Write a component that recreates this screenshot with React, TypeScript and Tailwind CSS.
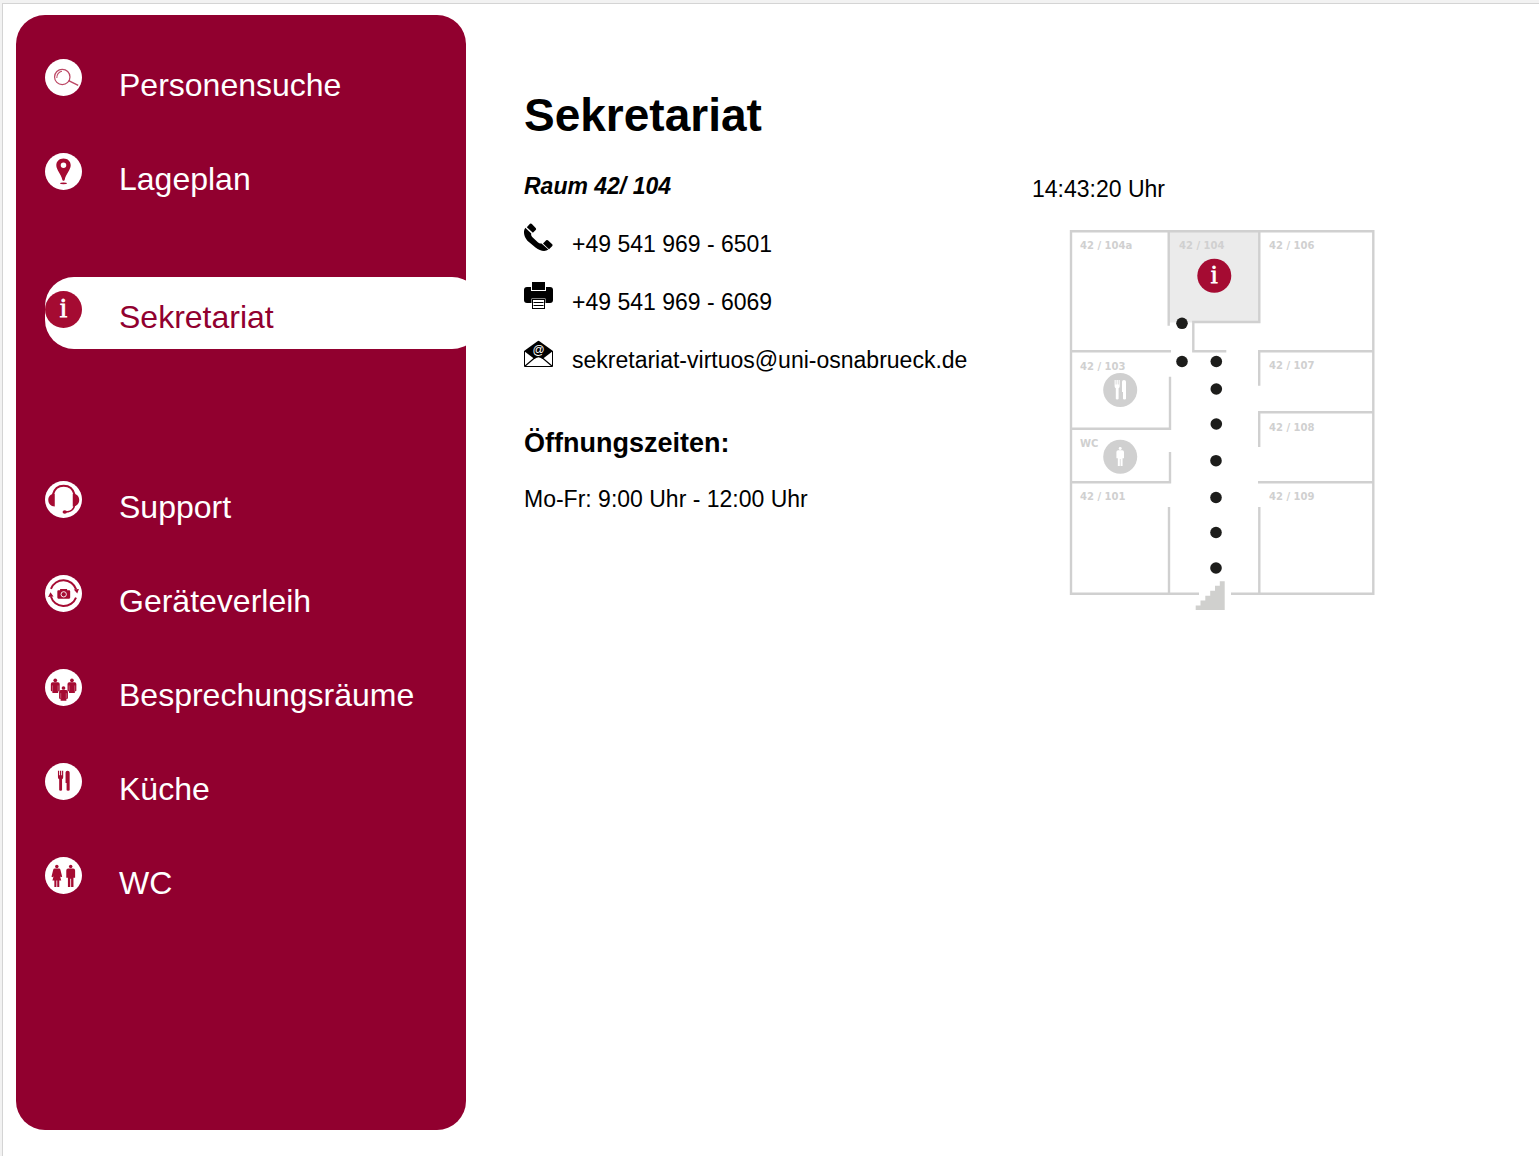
import type { ReactNode } from "react";

const RED = "#a50b32";

function Badge({ children }: { children: ReactNode }) {
  return (
    <svg viewBox="0 0 36 36" className="mt-[14px] h-[37px] w-[37px] shrink-0" aria-hidden="true">
      <circle cx="18" cy="18" r="18" fill="#fff" />
      {children}
    </svg>
  );
}

function Cutlery() {
  return (
    <>
      <path d="M12.600 7.500h1.100v4.500h.8V7.500h1.300v4.500h.8V7.500h1.100v6.300q0 1.400-1.100 1.900v10.500q0 .8-1.400.8t-1.400-.8V15.700q-1.200-.5-1.200-1.900z" />
      <path d="M20 9.200q0-1.700 2-1.700t2 1.700v17q0 .8-1.500.8t-1.500-.8v-6.700h-1z" />
    </>
  );
}

function Torso({ x, y }: { x: number; y: number }) {
  return (
    <g transform={`translate(${x} ${y})`}>
      <circle cx="0" cy="0" r="1.800" />
      <path d="M-2.600 2h5.200q1.700 0 1.700 1.700v6.100q0 .8-.8.800h-.7v1.700h-5.600v-1.700h-.7q-.8 0-.8-.8V3.700q0-1.700 1.700-1.700z" />
      <path d="M-2.700 5v5.300M2.700 5v5.300" stroke="#fff" strokeWidth="0.300" />
    </g>
  );
}

function Man() {
  return (
    <>
      <circle cx="0" cy="-9" r="1.700" />
      <path d="M-2.400-7h4.800q1.900 0 1.900 1.900v7h-1.600v9H.4v-8h-.8v8h-2.300v-9h-1.600v-7q0-1.900 1.900-1.900z" />
    </>
  );
}

const icons = {
  search: (
    <g fill="none" stroke={RED} strokeOpacity="0.75">
      <circle cx="16.800" cy="17.500" r="7.500" strokeWidth="1.200" />
      <path d="M11.500 18.500a6 6 0 0 1 5-6.500" strokeWidth="1" />
      <path d="m23 21 9.300 4.700" strokeWidth="1.400" />
    </g>
  ),
  pin: (
    <g fill={RED}>
      <path
        fillRule="evenodd"
        d="M18 5.300c-4.100 0-7 2.800-7 6.700 0 4.500 4.500 8 5.900 14.200q1.100 1.700 2.200 0C20.500 20 25 16.500 25 12c0-3.900-2.900-6.700-7-6.700zm0 4a2.700 2.700 0 1 1 0 5.400 2.700 2.700 0 0 1 0-5.400z"
      />
      <ellipse cx="18" cy="29.500" rx="3.300" ry="0.900" />
    </g>
  ),
  info: (
    <>
      <circle cx="18" cy="18" r="18" fill={RED} />
      <text x="18" y="25.500" textAnchor="middle" fontSize="26" fill="#fff" stroke="#fff" strokeWidth="0.800" className="font-['Liberation_Serif',serif]">
        i
      </text>
    </>
  ),
  headset: (
    <g fill={RED}>
      <path d="M9.500 12.500v12.300C5.500 24.800 3.200 22.100 3.200 18.600s2.300-6.100 6.300-6.100zM27 12.500v12.300c4 0 6.300-2.700 6.300-6.200S31 12.500 27 12.500z" />
      <path d="M7.500 13.500C9 7.500 13 4.600 18.200 4.600s9.200 2.900 10.700 8.900" fill="none" stroke={RED} strokeWidth="2" />
      <path d="M28.800 23.500c-.7 4.300-4 6.600-9.300 6.700" fill="none" stroke={RED} strokeWidth="1.500" />
      <ellipse cx="19.200" cy="30.200" rx="2.100" ry="1.700" />
    </g>
  ),
  camera: (
    <g fill={RED}>
      <path d="M5.800 13.500a13 13 0 0 1 24.500.5" fill="none" stroke={RED} strokeWidth="1.900" />
      <path d="M30.200 22a13 13 0 0 1-24.500-1" fill="none" stroke={RED} strokeWidth="1.900" />
      <path d="m28 14.200 5-.7-1.600 4.500zM3 21.500l2.300-4.800 3 4.300z" />
      <path d="M13 14.900h1.700v-1.400h6.800v1.400h2q1 0 1 1V22q0 1-1 1H13q-1 0-1-1v-6.100q0-1 1-1z" />
      <circle cx="18.200" cy="18.800" r="2.600" fill="none" stroke="#fff" strokeWidth="0.900" />
    </g>
  ),
  people: (
    <g fill={RED}>
      <Torso x={10} y={11} />
      <Torso x={26.200} y={11} />
      <Torso x={18} y={18.500} />
    </g>
  ),
  cutlery: (
    <g fill={RED}>
      <Cutlery />
    </g>
  ),
  restroom: (
    <g fill={RED}>
      <circle cx="11.500" cy="9.200" r="1.700" />
      <path d="M9.500 11.200h4q1.200 0 1.500 1.200l1.700 6.700-1.500.5-.8-1.700 1.400 5h-1.900v6.200h-2v-6.200h-.8v6.200h-2v-6.200H7.200l1.400-5-.8 1.700-1.500-.5L8 12.400q.3-1.200 1.500-1.200z" />
      <g transform="translate(25 18.200)">
        <Man />
      </g>
    </g>
  ),
};

type NavEntry = { label: string; icon: keyof typeof icons; active?: boolean };

const entries: NavEntry[] = [
  { label: "Personensuche", icon: "search" },
  { label: "Lageplan", icon: "pin" },
  { label: "Sekretariat", icon: "info", active: true },
  { label: "Support", icon: "headset" },
  { label: "Geräteverleih", icon: "camera" },
  { label: "Besprechungsräume", icon: "people" },
  { label: "Küche", icon: "cutlery" },
  { label: "WC", icon: "restroom" },
];

function Sidebar() {
  return (
    <nav
      aria-label="Hauptmenü"
      className="mt-[11px] mb-[26px] ml-[13px] w-[450px] shrink-0 overflow-hidden rounded-[29px] bg-[#91002f] pt-[30px] pl-[29px]"
    >
      <ul className="flex flex-col gap-[22px]">
        {entries.map(({ label, icon, active }) => (
          <li key={label} className={active ? "mt-11 mb-24 -mr-[15px]" : ""}>
            <a
              href="#"
              aria-current={active ? "page" : undefined}
              className={
                active
                  ? "flex h-[72px] items-start gap-[37px] rounded-[29px] bg-white text-[#91002f]"
                  : "flex h-[72px] items-start gap-[37px] text-white"
              }
            >
              <Badge>{icons[icon]}</Badge>
              <span className="mt-[22px] text-[32px] leading-9">{label}</span>
            </a>
          </li>
        ))}
      </ul>
    </nav>
  );
}

function PhoneIcon() {
  return (
    <svg viewBox="0 0 30 30" className="h-[30px] w-[30px] shrink-0" aria-label="Telefon">
      <path d="m2.800 4.200 3.200-3.400q1-.8 1.900.2l4 4.300q.6.900-.2 1.700L8.900 9.700zM19 20.600l3.200-3.400q.8-.6 1.700.1l4.300 3.900q.8.800.1 1.700l-3.300 3.300z" />
      <path d="m1.300 4.800 6 5.800q-.6 1.700.9 3.500l5.600 5.200q1.800 1.500 3.700 1.100l6.900 6.200c-3.100 2.400-8.200 1.700-12.900-2.100L3.400 17.700C-.2 13.500-1.100 8 1.300 4.800z" />
    </svg>
  );
}

function PrinterIcon() {
  return (
    <svg viewBox="0 0 30 30" className="h-[30px] w-[30px] shrink-0" aria-label="Fax">
      <path d="M3 6h23q3 0 3 3v10q0 3-3 3H3q-3 0-3-3V9q0-3 3-3z" />
      <rect x="7.500" y="0.500" width="14" height="9" stroke="#fff" />
      <rect x="7.500" y="17.500" width="14" height="11" fill="#fff" />
      <rect x="8.500" y="18.500" width="12" height="9" fill="#fff" stroke="#000" />
      <path d="M9.500 21.500h10M9.500 24.500h10" stroke="#000" />
    </svg>
  );
}

function MailIcon() {
  return (
    <svg viewBox="0 0 30 30" className="h-[30px] w-[30px] shrink-0" aria-label="E-Mail">
      <path d="M.5 12v15.500h28V12" fill="#fff" stroke="#000" />
      <path d="M0 12 13.500 2.200q1-.7 2 0L29 12l-10.500 8q-4-3.500-8 0z" />
      <path d="m.8 27.300 10-8.500q3.700-3 7.400 0l10 8.500" fill="none" stroke="#000" strokeWidth="1.200" />
      <text x="14.500" y="14.500" textAnchor="middle" fontSize="12" fill="#fff">
        @
      </text>
    </svg>
  );
}

const contacts = [
  { text: "+49 541 969 - 6501", icon: <PhoneIcon /> },
  { text: "+49 541 969 - 6069", icon: <PrinterIcon /> },
  { text: "sekretariat-virtuos@uni-osnabrueck.de", icon: <MailIcon /> },
];

const rooms = [
  { name: "42 / 104a", x: 11, y: 20 },
  { name: "42 / 104", x: 110, y: 20 },
  { name: "42 / 106", x: 200, y: 20 },
  { name: "42 / 103", x: 11, y: 141 },
  { name: "42 / 107", x: 200, y: 140 },
  { name: "42 / 108", x: 200, y: 202 },
  { name: "WC", x: 11, y: 218 },
  { name: "42 / 101", x: 11, y: 271 },
  { name: "42 / 109", x: 200, y: 271 },
];

const route = [
  [113, 94.300],
  [113, 132.500],
  [147.300, 132.500],
  [147.300, 160],
  [147.300, 195],
  [147, 231.700],
  [147, 268.500],
  [147, 303.500],
  [147, 339],
];

function FloorPlan() {
  return (
    <svg viewBox="0 0 306 382" className="mt-[27px] ml-[37px] h-[382px] w-[306px]" role="img" aria-label="Lageplan">
      <path d="M99.700 2h90.600v91.500H99.700z" fill="#ebebeb" />
      <path
        fill="none"
        stroke="#d0d0d0"
        strokeWidth="2.400"
        d="M130 364.700H2V2.200h302.300v362.500H162M99.700 2v94.700M2 122.300h100M190.300 2v91H124.300v29.300h33M304 122.300H190.200v34.400M304 183.300H190.200V218M304 253.300H189M190.300 278v86.700M2 199.700h99v-52M2 253.300h99V223M100 278v86.700"
      />
      <path
        fill="#d0d0ce"
        d="M126.700 381v-4.500h4.800v-4.900h4.800v-4.900h4.900v-5h4.800v-5h4.800v-4.400h4.900V381z"
      />
      <g fill="#d0d0d0" fontSize="10" className="font-['DejaVu_Sans',sans-serif] font-bold">
        {rooms.map((r) => (
          <text key={r.name} x={r.x} y={r.y}>
            {r.name}
          </text>
        ))}
      </g>
      <g fill="#1d1d1b">
        {route.map(([x, y]) => (
          <circle key={`${x}-${y}`} cx={x} cy={y} r="5.800" />
        ))}
      </g>
      <circle cx="145.300" cy="46.700" r="17" fill={RED} />
      <text x="145.300" y="54" textAnchor="middle" fontSize="25" fill="#fff" stroke="#fff" strokeWidth="0.800" className="font-['Liberation_Serif',serif]">
        i
      </text>
      <circle cx="51.200" cy="161" r="17" fill="#d0d0d0" />
      <g fill="#fff" transform="translate(33 143.500)">
        <Cutlery />
      </g>
      <circle cx="51.200" cy="227.700" r="17" fill="#d0d0d0" />
      <g fill="#fff" transform="translate(51.200 227.500) scale(.88)">
        <Man />
      </g>
    </svg>
  );
}

export default function App() {
  return (
    <div className="min-h-screen bg-[#f2f2f2] pt-[3px] pl-[2px] font-['Liberation_Sans',Arial,sans-serif] text-black">
      <div className="flex min-h-[calc(100vh-3px)] border-t border-l border-[#d4d4d4] bg-white">
        <Sidebar />
        <main className="flex-1 pt-[84px] pl-[58px] text-[23px] leading-[26px]">
          <h1 className="text-[46px] leading-[54px] font-bold">Sekretariat</h1>
          <div className="mt-[31px] grid grid-cols-[508px_1fr]">
            <section>
              <p className="font-bold italic">Raum 42/ 104</p>
              <ul className="mt-6 flex flex-col gap-6">
                {contacts.map((c) => (
                  <li key={c.text} className="flex items-start gap-[18px]">
                    {c.icon}
                    <span className="mt-2">{c.text}</span>
                  </li>
                ))}
              </ul>
              <h2 className="mt-[55px] text-[27px] leading-[30px] font-bold">Öffnungszeiten:</h2>
              <p className="mt-7">Mo-Fr: 9:00 Uhr - 12:00 Uhr</p>
            </section>
            <section className="pt-[3px]">
              <time className="block">14:43:20 Uhr</time>
              <FloorPlan />
            </section>
          </div>
        </main>
      </div>
    </div>
  );
}
